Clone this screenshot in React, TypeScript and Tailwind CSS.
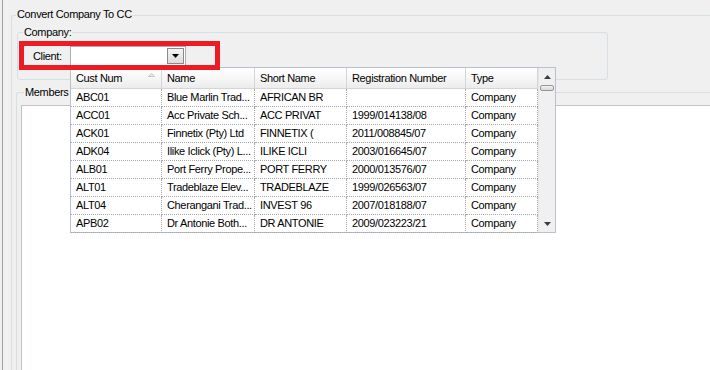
import React from "react";

const rows: string[][] = [
  ["ABC01", "Blue Marlin Trad...", "AFRICAN BR", "", "Company"],
  ["ACC01", "Acc Private Sch...", "ACC PRIVAT", "1999/014138/08", "Company"],
  ["ACK01", "Finnetix (Pty) Ltd", "FINNETIX (", "2011/008845/07", "Company"],
  ["ADK04", "Ilike Iclick (Pty) L...", "ILIKE ICLI", "2003/016645/07", "Company"],
  ["ALB01", "Port Ferry Prope...", "PORT FERRY", "2000/013576/07", "Company"],
  ["ALT01", "Tradeblaze Elev...", "TRADEBLAZE", "1999/026563/07", "Company"],
  ["ALT04", "Cherangani Trad...", "INVEST 96", "2007/018188/07", "Company"],
  ["APB02", "Dr Antonie Both...", "DR ANTONIE", "2009/023223/21", "Company"],
];

const headers = ["Cust Num", "Name", "Short Name", "Registration Number", "Type"];
const widthClasses = ["w-[91px]", "w-[93px]", "w-[92px]", "w-[119px]", "w-[72px]"];

function Combo() {
  return (
    <div className="w-[116px] h-[20px] bg-white border border-[#abadb3] flex justify-end p-px">
      <div className="w-[17px] border border-[#8a8a8a] bg-gradient-to-b from-[#f4f4f4] to-[#dcdcdc] flex items-center justify-center">
        <svg width="7" height="4" viewBox="0 0 7 4">
          <path d="M0 0H7L3.5 4Z" fill="#000" />
        </svg>
      </div>
    </div>
  );
}

function Scrollbar() {
  return (
    <div className="w-[17px] h-full bg-[#f0f0f0] border-l border-[#e6e6e6] flex flex-col">
      <div className="h-[17px] flex items-center justify-center">
        <svg width="7" height="4" viewBox="0 0 7 4">
          <path d="M0 4L3.5 0L7 4Z" fill="#3c3c3c" />
        </svg>
      </div>
      <div className="mx-[1px] h-[6px] rounded-[2px] border border-[#979797] bg-gradient-to-b from-[#f2f2f2] to-[#d6d6d6]" />
      <div className="flex-1" />
      <div className="h-[17px] flex items-center justify-center">
        <svg width="7" height="4" viewBox="0 0 7 4">
          <path d="M0 0H7L3.5 4Z" fill="#3c3c3c" />
        </svg>
      </div>
    </div>
  );
}

export default function App() {
  return (
    <div className="relative w-[710px] h-[370px] overflow-hidden bg-[#f0f0f0] text-black text-[11px] tracking-[-0.35px] font-['Liberation_Sans',Arial,sans-serif]">
      <div className="flex h-full">
        <div className="w-[2px] shrink-0" />
        <div className="w-px shrink-0 bg-[#a0a0a0]" />
        <div className="pl-[8px] pt-[15px] shrink-0">
          <div className="w-[720px] h-[400px] border-l border-t border-[#d5dfe5] rounded-tl-[3px]">
            <div className="-mt-[8px] ml-[4px] w-fit h-[13px] leading-[13px] px-px bg-[#f0f0f0]">
              Convert Company To CC
            </div>
            <div className="mt-[11px] ml-[5px] w-[591px] h-[48px] border border-[#d5dfe5] rounded-[3px]">
              <div className="-mt-[7px] ml-[5px] w-fit h-[13px] leading-[13px] px-px bg-[#f0f0f0]">
                Company:
              </div>
              <div className="mt-[7px] ml-[15px] flex items-center h-[20px]">
                <div className="w-[37px]">Client:</div>
                <Combo />
              </div>
            </div>
            <div className="mt-[12px] ml-[4px] w-[720px] h-[300px] border-l border-t border-[#d5dfe5] rounded-tl-[3px]">
              <div className="-mt-[7px] ml-[7px] w-[45px] h-[13px] leading-[13px] px-px bg-[#f0f0f0] whitespace-nowrap overflow-hidden">
                Members of Company
              </div>
              <div className="mt-[6px] ml-[4px] h-[300px] bg-white border-l border-t border-[#c3c3c3]" />
            </div>
          </div>
        </div>
      </div>

      {/* dropdown grid */}
      <div className="absolute left-[70px] top-[67px] w-[486px] h-[166px] bg-white border border-[#b9c2cc] flex">
        <div className="w-[467px]">
          <div className="flex h-[21px]">
            {headers.map((h, i) => (
              <div
                key={h}
                className={`${widthClasses[i]} relative h-full bg-gradient-to-b from-white via-[#f7f7f7] to-[#ececec] border-r border-b border-[#d5d5d5] pl-[5px] leading-[20px] whitespace-nowrap overflow-hidden`}
              >
                {h}
                {i === 0 && (
                  <svg className="absolute right-[6px] top-[5px]" width="7" height="4" viewBox="0 0 7 4">
                    <path d="M0.5 3.5L3.5 0.5L6.5 3.5Z" fill="#ececec" stroke="#c4c4c4" strokeWidth="1" />
                  </svg>
                )}
              </div>
            ))}
          </div>
          {rows.map((r) => (
            <div key={r[0]} className="flex h-[18px]">
              {r.map((c, i) => (
                <div
                  key={i}
                  className={`${widthClasses[i]} h-full border-r border-b border-dotted border-[#a8a8a8] pl-[5px] leading-[17px] whitespace-nowrap overflow-hidden`}
                >
                  {c}
                </div>
              ))}
            </div>
          ))}
        </div>
        <Scrollbar />
      </div>

      {/* red annotation */}
      <div className="absolute left-[19px] top-[41px] w-[201px] h-[29px] border-[5px] border-[#ed1c24]" />
    </div>
  );
}
